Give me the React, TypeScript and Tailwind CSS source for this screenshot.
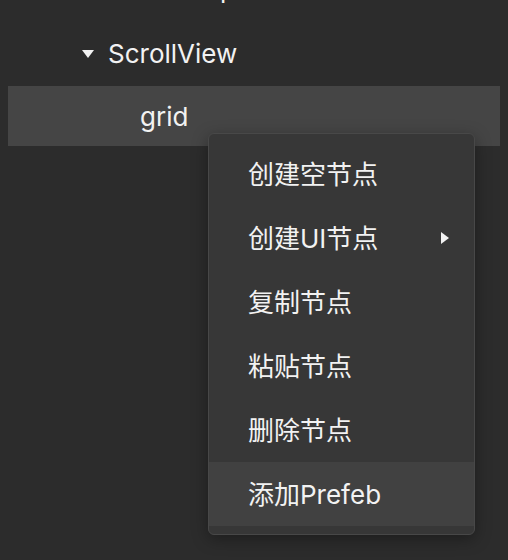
import React from "react";

const items = ["创建空节点", "创建UI节点", "复制节点", "粘贴节点", "删除节点", "添加Prefeb"];

const font = { fontFamily: 'Inter, "Noto Sans CJK SC", sans-serif' };

const App = () => {
  return (
    <div
      className="relative w-[508px] h-[560px] overflow-hidden bg-[#2c2c2c] text-[26px] text-[#f2f2f2]"
      style={font}
    >
      {/* Tree */}
      <div className="flex flex-col px-2 -mt-[44px]">
        <div className="flex items-center h-[65px] pl-[92px]">ViewGroup</div>
        <div className="flex items-center h-[65px] pl-[74px] gap-[14px]">
          <svg width="12" height="8" viewBox="0 0 12 8">
            <path d="M0 0h12L6 8z" fill="#f2f2f2" />
          </svg>
          <span>ScrollView</span>
        </div>
        <div className="flex items-center h-[60px] pl-[132px] bg-[#454545]">grid</div>
      </div>

      {/* Context menu */}
      <div className="absolute left-[208px] top-[133px] w-[267px] py-2 rounded-md border border-[#484848] bg-[#373737] shadow-[0_4px_16px_rgba(0,0,0,0.35)]">
        {items.map((label, i) => (
          <div
            key={label}
            className={`flex items-center justify-between h-[64px] pl-[39px] pr-[25px] ${
              i === items.length - 1 ? "bg-[#414141]" : ""
            }`}
          >
            <span>{label}</span>
            {i === 1 && (
              <svg width="8" height="12" viewBox="0 0 8 12">
                <path d="M0 0l8 6-8 6z" fill="#f2f2f2" />
              </svg>
            )}
          </div>
        ))}
      </div>
    </div>
  );
};

export default App;
